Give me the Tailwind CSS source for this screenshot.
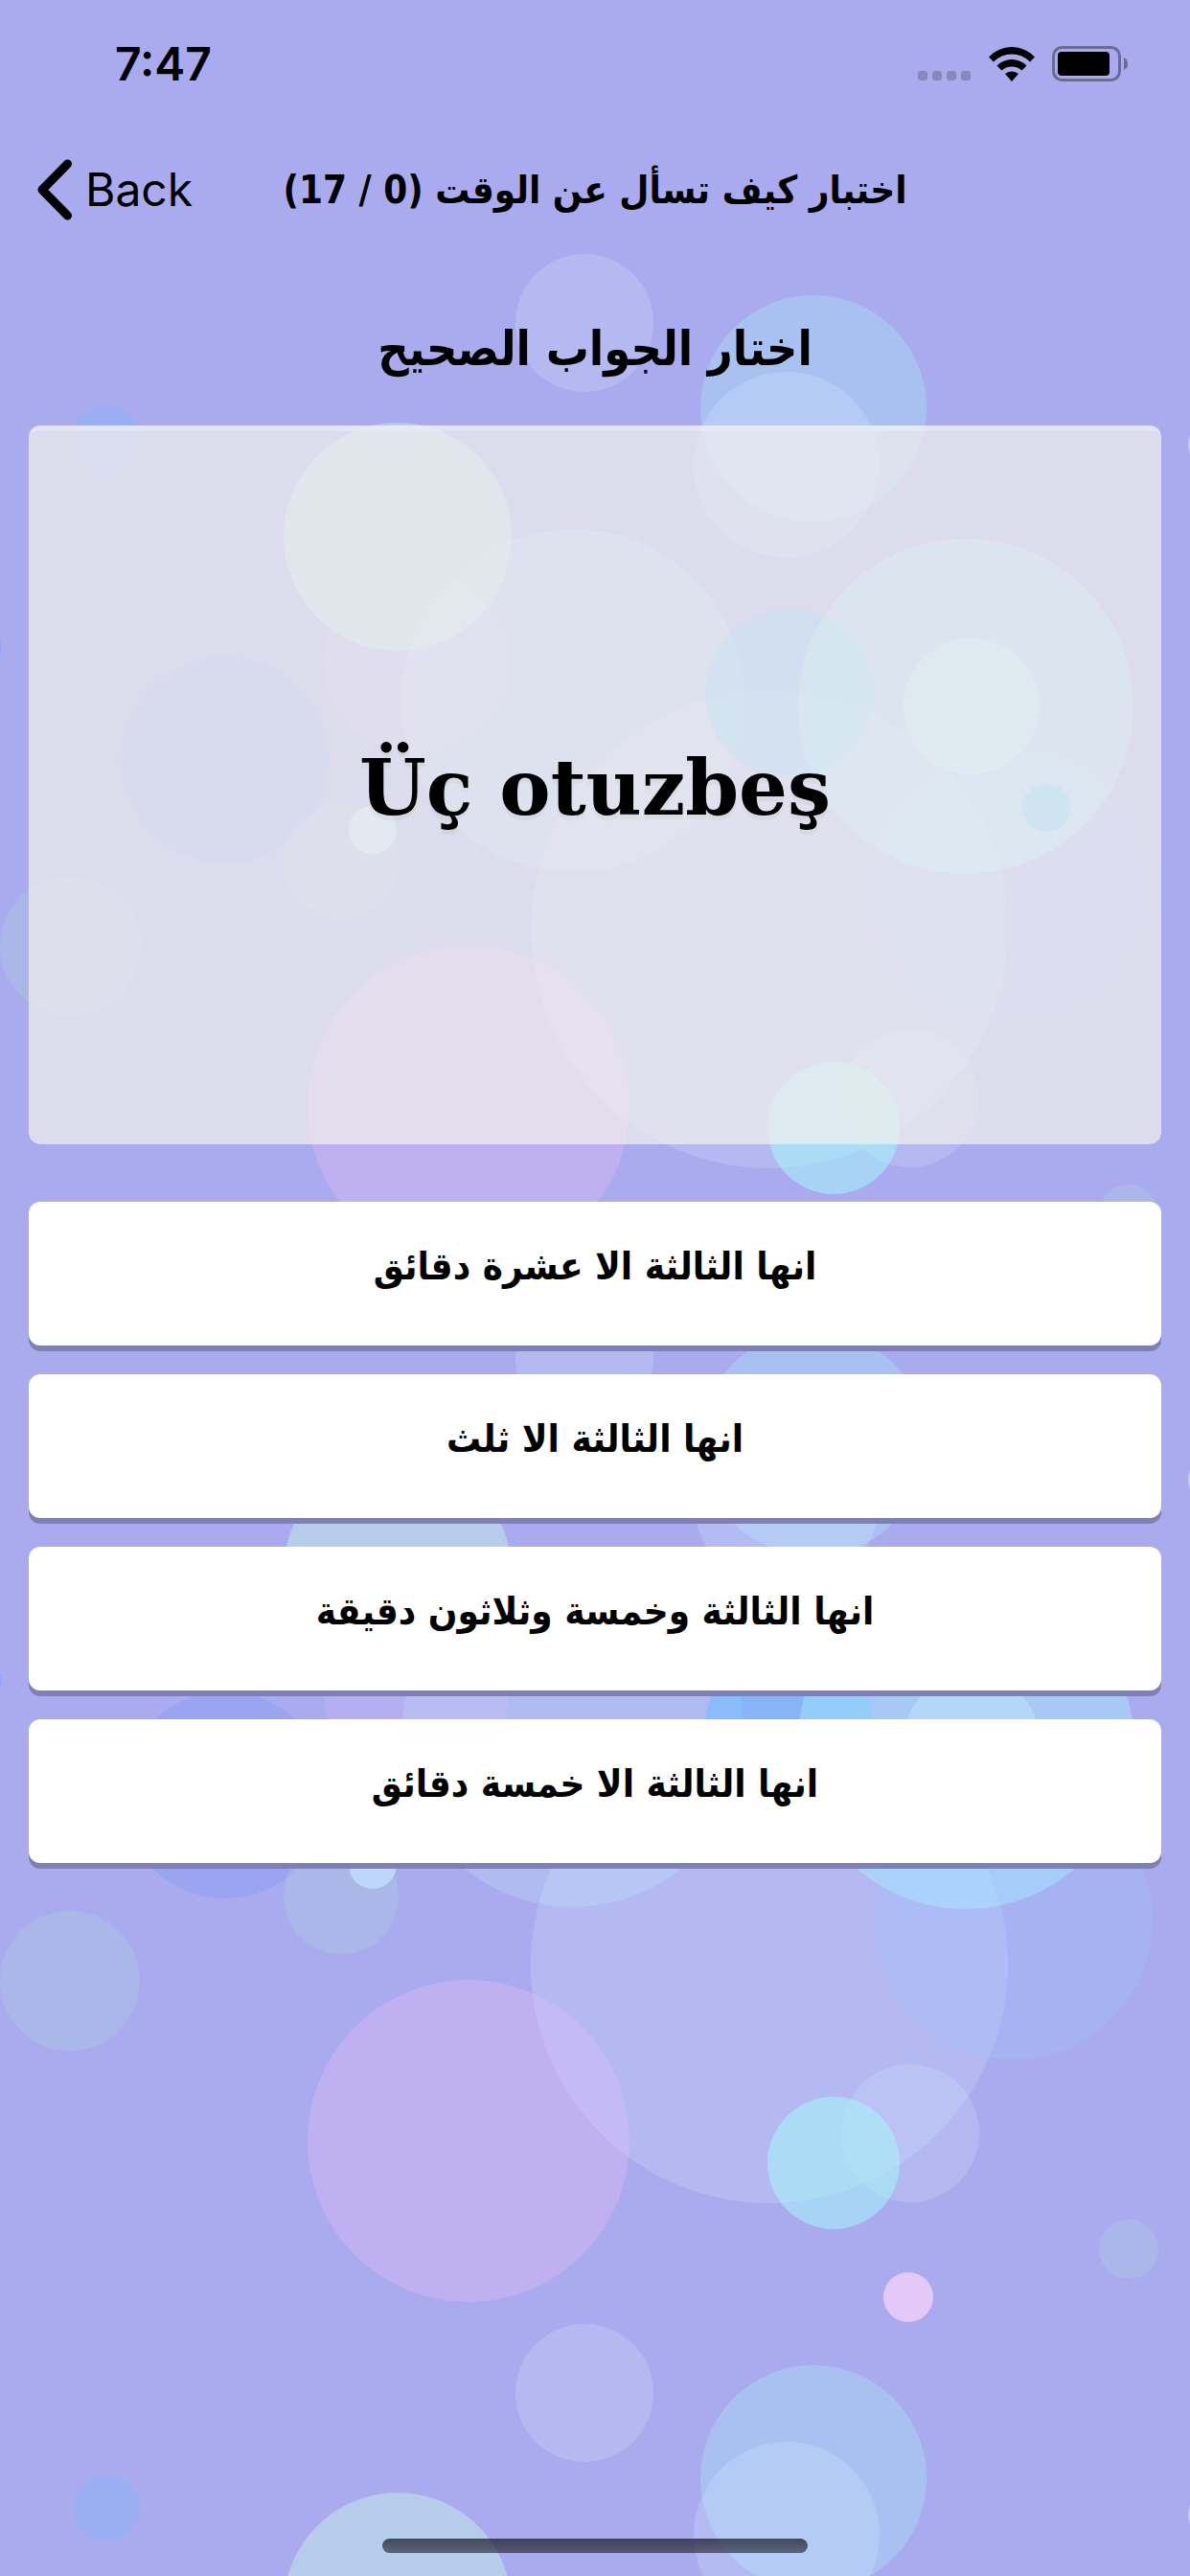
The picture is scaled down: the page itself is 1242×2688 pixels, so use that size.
<!DOCTYPE html>
<html lang="ar">
  <head>
    <meta charset="UTF-8" />
    <meta name="viewport" content="width=device-width, initial-scale=1.0" />
    <title>اختبار كيف تسأل عن الوقت</title>
    <script src="https://cdn.jsdelivr.net/npm/@tailwindcss/browser@4"></script>
  </head>
  <body class="min-h-screen flex flex-col bg-[#aaaaee] text-black font-['DejaVu_Sans_Condensed','DejaVu_Sans',sans-serif]">

    <header class="h-[264px] flex flex-col">
      <!-- status bar -->
      <div class="h-[134px] flex items-center justify-between pl-[120px] pr-16 font-['Inter',sans-serif]">
        <span class="text-[48px] leading-none font-semibold">7:47</span>
        <div class="flex items-center gap-[18px]">
          <svg class="w-[56px] h-[40px]" viewBox="0 0 56 40" fill="#8888bf">
            <rect x="0" y="27" width="10" height="10" rx="3" />
            <rect x="15" y="27" width="10" height="10" rx="3" />
            <rect x="30" y="27" width="10" height="10" rx="3" />
            <rect x="45" y="27" width="10" height="10" rx="3" />
          </svg>
          <svg class="w-[48px] h-[36px]" viewBox="0 0 48 36">
            <path d="M0 10.500Q10 0 24 0T48 10.500L43 15.500Q35 7.500 24 7.500T5 15.500Z" />
            <path d="M8.500 19.500Q15 13 24 13T39.500 19.500L34.500 24.500Q30 20.500 24 20.500T13.500 24.500Z" />
            <path d="M17 28Q20 25.500 24 25.500T31 28L24 36Z" />
          </svg>
          <svg class="w-[80px] h-[38px]" viewBox="0 0 80 38">
            <rect x="1.500" y="1.500" width="69" height="34" rx="9" fill="none" stroke="#6a6a94" stroke-width="3" />
            <rect x="6" y="6" width="54" height="25" rx="4" />
            <path d="M75 12Q79 14 79 18.500T75 25Z" fill="#6a6a94" />
          </svg>
        </div>
      </div>
      <!-- nav bar -->
      <nav class="h-[130px] grid grid-cols-[1fr_auto_1fr] items-start pl-[38px] pr-[38px] pt-8">
        <a href="#" class="justify-self-start flex items-center gap-[13px] h-16 font-['Inter',sans-serif] text-[48px] leading-none">
          <svg class="w-[38px] h-[64px]" viewBox="0 0 38 64" fill="none" stroke="#000" stroke-width="9" stroke-linecap="round" stroke-linejoin="round">
            <path d="M32.500 5L6 32L32.500 59" />
          </svg>
          Back
        </a>
        <h1 dir="rtl" class="h-16 flex items-center text-[40px] leading-none font-bold whitespace-nowrap">اختبار كيف تسأل عن الوقت (0 / 17)</h1>
      </nav>
    </header>

    <main class="relative flex-1 flex flex-col px-[30px]">
      <svg class="absolute inset-0 w-full h-full" aria-hidden="true">
        <defs>
          <pattern id="bubbles" width="2000" height="1080" patternUnits="userSpaceOnUse">
            <circle cx="803" cy="706" r="249" fill="#cadcfa" fill-opacity=".3" />
            <circle cx="598" cy="467" r="179" fill="#bee1fa" fill-opacity=".32" />
            <circle cx="434" cy="425" r="96" fill="#d2befa" fill-opacity=".22" />
            <circle cx="1058" cy="660" r="145" fill="#a0c3ff" fill-opacity=".3" />
            <circle cx="824" cy="459" r="88" fill="#64beff" fill-opacity=".5" />
            <circle cx="1008" cy="473" r="175" fill="#a5ebff" fill-opacity=".46" />
            <circle cx="1014" cy="473" r="71" fill="#c8f5ff" fill-opacity=".33" />
            <circle cx="1092" cy="579" r="25" fill="#5ac3ff" fill-opacity=".6" />
            <circle cx="415" cy="296" r="119" fill="#bee6e6" fill-opacity=".55" />
            <circle cx="235" cy="529" r="108" fill="#829bf5" fill-opacity=".38" />
            <circle cx="356" cy="635" r="60" fill="#aacddc" fill-opacity=".35" />
            <circle cx="389" cy="602" r="25" fill="#c3e0ff" fill-opacity=".75" />
            <circle cx="73" cy="723" r="73" fill="#aacddc" fill-opacity=".35" />
            <circle cx="489" cy="890" r="168" fill="#ebbefa" fill-opacity=".32" />
            <circle cx="950" cy="882" r="72" fill="#cae1fa" fill-opacity=".26" />
            <circle cx="870" cy="913" r="69" fill="#a5fafa" fill-opacity=".52" />
            <circle cx="1178" cy="1003" r="31" fill="#aacddc" fill-opacity=".35" />
            <circle cx="948" cy="1053" r="26" fill="#e4c8f8" />
            <circle cx="610" cy="73" r="72" fill="#cadcfa" fill-opacity=".3" />
            <circle cx="849" cy="162" r="118" fill="#a5e1f5" fill-opacity=".42" />
            <circle cx="821" cy="221" r="97" fill="#cae0ff" fill-opacity=".32" />
            <circle cx="111" cy="193" r="35" fill="#82b4fa" fill-opacity=".4" />
            <circle cx="1268" cy="200" r="28" fill="#d2e1ff" fill-opacity=".6" />
            <circle cx="-30" cy="411" r="31" fill="#829bff" fill-opacity=".7" />
          </pattern>
        </defs>
        <rect width="100%" height="100%" fill="url(#bubbles)" />
      </svg>

      <h2 dir="rtl" class="relative h-[180px] pt-[68px] text-center text-[50px] leading-[64px] font-bold">اختار الجواب الصحيح</h2>

      <section class="relative h-[750px] flex items-center justify-center rounded-xl border-t-[6px] border-[#eeeefa]/85 bg-[#f2f1ec]/70 bg-clip-padding">
        <p lang="tr" class="text-[80px] leading-none font-bold font-['DejaVu_Serif',serif] [text-shadow:0_5px_2px_rgb(0_0_0/0.04)]">Üç otuzbeş</p>
      </section>

      <div dir="rtl" class="relative mt-[60px] flex flex-col gap-[30px] text-[40px] leading-[48px] font-bold">
        <button class="h-[150px] pb-4 rounded-xl bg-white shadow-[0_6px_0_#8080b2]">انها الثالثة الا عشرة دقائق</button>
        <button class="h-[150px] pb-4 rounded-xl bg-white shadow-[0_6px_0_#8080b2]">انها الثالثة الا ثلث</button>
        <button class="h-[150px] pb-4 rounded-xl bg-white shadow-[0_6px_0_#8080b2]">انها الثالثة وخمسة وثلاثون دقيقة</button>
        <button class="h-[150px] pb-4 rounded-xl bg-white shadow-[0_6px_0_#8080b2]">انها الثالثة الا خمسة دقائق</button>
      </div>

      <div class="relative mt-auto mb-6 self-center w-[444px] h-[15px] rounded-full bg-linear-to-b from-[#10141a]/70 to-[#10141a]/55"></div>
    </main>
  </body>
</html>
